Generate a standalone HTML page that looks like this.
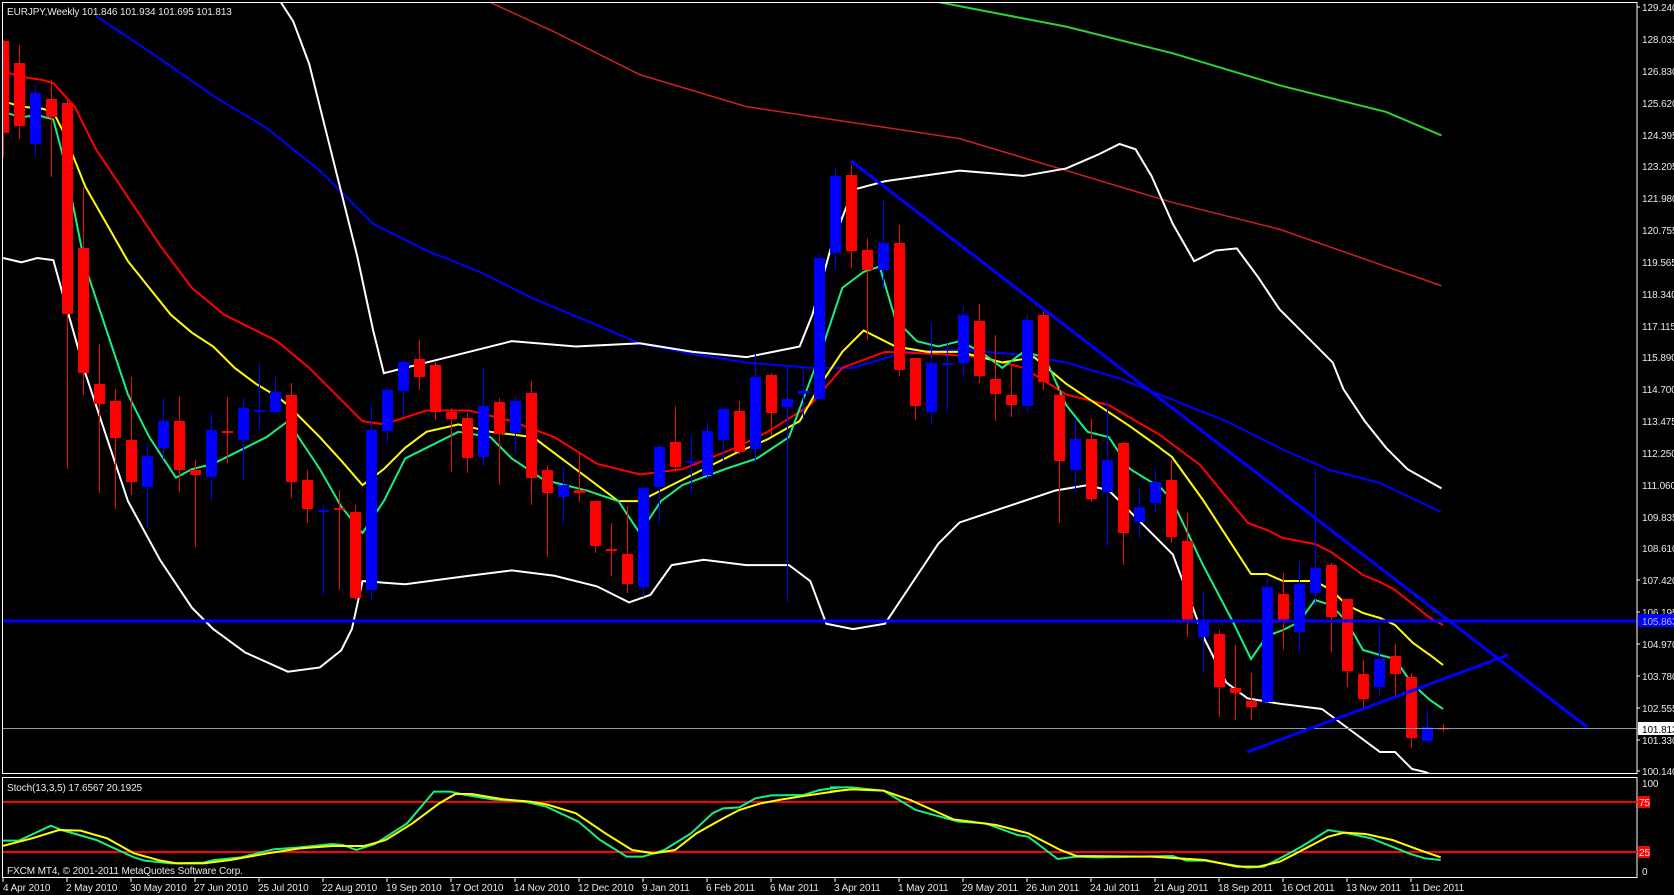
<!DOCTYPE html>
<html><head><meta charset="utf-8">
<style>
html,body{margin:0;padding:0;background:#000;width:1674px;height:895px;overflow:hidden}
svg{display:block}
text{font-family:"Liberation Sans",sans-serif;font-size:10px;letter-spacing:-0.1px;fill:#e8e8e8}
.ns{vector-effect:non-scaling-stroke;fill:none}
</style></head><body>
<svg width="1674" height="895" viewBox="0 0 1674 895" xmlns="http://www.w3.org/2000/svg">
<rect x="0" y="0" width="1674" height="895" fill="#000"/>
<defs><clipPath id="mc"><rect x="3" y="3" width="1634" height="770"/></clipPath>
<clipPath id="sc"><rect x="3" y="778" width="1634" height="99"/></clipPath></defs>

<g clip-path="url(#mc)">
<g transform="scale(1.0662)">
<polyline class="ns" stroke="#2fd32f" stroke-width="2" points="870,0 1000,25 1100,50 1200,80 1300,105 1352,127"/>
<polyline class="ns" stroke="#c8231f" stroke-width="1.5" points="455,0 520,30 600,70 700,100 800,115 900,130 1000,160 1100,190 1200,215 1300,250 1352,268"/>
<polyline class="ns" stroke="#0000ff" stroke-width="2" points="90,15 150,55 200,90 250,120 300,160 350,210 400,235 450,255 500,280 560,305 600,322 650,332 700,340 760,345 800,345 850,330 900,328 950,332 1000,340 1050,355 1100,375 1150,395 1200,420"/>
<polyline class="ns" stroke="#ffffff" stroke-width="2" points="262,0 275,20 290,60 305,120 320,180 335,240 350,310 360,350 380,345 420,335 480,320 540,325 600,322 650,330 700,335 750,325 762,295 780,230 800,178 830,170 900,160 960,165 1000,158 1030,145 1050,135 1065,140 1080,165 1100,210 1120,245 1140,235 1160,233 1180,260 1200,290 1230,320 1250,340 1260,365 1280,395 1300,420 1320,440 1352,458"/>
<polyline class="ns" stroke="#ffffff" stroke-width="2" points="3,242 20,246 35,242 50,244 60,280 80,350 100,410 120,470 150,525 180,570 200,590 230,612 270,630 300,626 320,610 330,590 340,545 380,548 440,540 480,535 520,540 560,550 590,565 610,558 630,530 660,525 700,530 740,530 760,545 775,585 800,590 830,585 860,540 880,510 900,490 930,480 960,470 990,460 1020,455 1040,460 1060,480 1080,500 1100,520 1130,600 1150,640 1170,655 1200,660 1240,665"/>
<polyline class="ns" stroke="#ff0000" stroke-width="2" points="3,67 20,72 40,75 50,78 70,100 90,140 120,185 150,230 180,270 210,295 240,310 260,320 290,345 320,375 340,395 360,398 400,385 440,385 480,395 520,410 560,435 600,445 640,440 690,420 720,405 760,380 790,345 830,330 880,332 920,335 960,345 1000,370 1040,380 1088,408"/>
<polyline class="ns" stroke="#ffff00" stroke-width="2" points="3,95 20,100 40,102 50,105 60,125 70,150 80,175 100,210 120,245 140,270 160,295 180,312 200,325 220,345 240,360 260,372 270,380 300,410 320,432 340,455 360,440 380,420 400,405 430,398 460,405 500,410 540,440 580,470 600,470 640,450 690,425 720,412 750,395 770,360 790,330 810,310 840,325 870,330 900,330 940,340 970,335 1000,360 1030,380 1060,400 1088,420"/>
<polyline class="ns" stroke="#17f080" stroke-width="2" points="3,105 20,110 35,108 50,112 60,150 70,200 80,250 100,310 120,370 140,410 165,448 180,440 200,435 230,420 250,410 270,395 300,440 320,475 340,500 360,470 380,430 400,420 430,405 460,410 480,430 510,450 550,460 580,470 600,500 620,470 640,455 680,440 710,430 740,410 770,330 790,270 810,255 825,250 840,300 860,320 880,325 900,320 920,330 940,345 960,330 980,335 1000,380 1020,405 1040,410 1060,440 1088,457"/>
</g>
<polyline fill="none" stroke="#0000ff" stroke-width="2" points="1279,448 1330,470 1380,483 1441,512"/>
<polyline fill="none" stroke="#ffffff" stroke-width="2" points="1322,709 1380,752 1395,752 1412,769 1425,772 1432,775"/>
<polyline fill="none" stroke="#ff0000" stroke-width="2" points="1160,435 1200,465 1248,523 1267,530 1283,538 1315,544 1331,552 1363,575 1380,582 1395,590 1410,602 1430,618 1443,625"/>
<polyline fill="none" stroke="#ffff00" stroke-width="2" points="1160,448 1172,457 1203,500 1251,574 1267,574 1283,581 1315,581 1331,590 1347,605 1363,613 1380,618 1395,625 1413,643 1430,655 1443,665"/>
<polyline fill="none" stroke="#17f080" stroke-width="2" points="1160,487 1172,500 1203,565 1232,620 1251,659 1267,636 1283,630 1299,622 1315,600 1331,605 1347,622 1363,650 1380,655 1395,659 1408,678 1420,691 1430,700 1443,709"/>

<g id="cd">
<line x1="3.5" y1="40" x2="3.5" y2="158" stroke="#f00"/><rect x="-2" y="41" width="11" height="92" fill="#f00"/>
<line x1="19.5" y1="45" x2="19.5" y2="139" stroke="#f00"/><rect x="14" y="63" width="11" height="63" fill="#f00"/>
<line x1="35.5" y1="85" x2="35.5" y2="157" stroke="#00f"/><rect x="30" y="93" width="11" height="51" fill="#00f"/>
<line x1="51.5" y1="80" x2="51.5" y2="177" stroke="#f00"/><rect x="46" y="99" width="11" height="18" fill="#f00"/>
<line x1="67.5" y1="100" x2="67.5" y2="469" stroke="#f00"/><rect x="62" y="103" width="11" height="211" fill="#f00"/>
<line x1="83.5" y1="187" x2="83.5" y2="395" stroke="#f00"/><rect x="78" y="248" width="11" height="125" fill="#f00"/>
<line x1="99.5" y1="344" x2="99.5" y2="493" stroke="#f00"/><rect x="94" y="384" width="11" height="20" fill="#f00"/>
<line x1="115.5" y1="389" x2="115.5" y2="509" stroke="#f00"/><rect x="110" y="401" width="11" height="37" fill="#f00"/>
<line x1="131.5" y1="377" x2="131.5" y2="495" stroke="#f00"/><rect x="126" y="440" width="11" height="42" fill="#f00"/>
<line x1="147.5" y1="445" x2="147.5" y2="528" stroke="#00f"/><rect x="142" y="456" width="11" height="31" fill="#00f"/>
<line x1="163.5" y1="398" x2="163.5" y2="459" stroke="#00f"/><rect x="158" y="421" width="11" height="27" fill="#00f"/>
<line x1="179.5" y1="396" x2="179.5" y2="492" stroke="#f00"/><rect x="174" y="421" width="11" height="49" fill="#f00"/>
<line x1="195.5" y1="460" x2="195.5" y2="547" stroke="#f00"/><rect x="190" y="470" width="11" height="5" fill="#f00"/>
<line x1="211.5" y1="413" x2="211.5" y2="501" stroke="#00f"/><rect x="206" y="430" width="11" height="47" fill="#00f"/>
<line x1="227.5" y1="397" x2="227.5" y2="463" stroke="#f00"/><rect x="222" y="431" width="11" height="2" fill="#f00"/>
<line x1="243.5" y1="398" x2="243.5" y2="480" stroke="#00f"/><rect x="238" y="408" width="11" height="32" fill="#00f"/>
<line x1="259.5" y1="363" x2="259.5" y2="430" stroke="#00f"/><rect x="254" y="410" width="11" height="2" fill="#00f"/>
<line x1="275.5" y1="377" x2="275.5" y2="413" stroke="#00f"/><rect x="270" y="392" width="11" height="20" fill="#00f"/>
<line x1="291.5" y1="383" x2="291.5" y2="498" stroke="#f00"/><rect x="286" y="395" width="11" height="87" fill="#f00"/>
<line x1="307.5" y1="470" x2="307.5" y2="523" stroke="#f00"/><rect x="302" y="480" width="11" height="29" fill="#f00"/>
<line x1="323.5" y1="505" x2="323.5" y2="595" stroke="#00f"/><rect x="318" y="510" width="11" height="2" fill="#00f"/>
<line x1="339.5" y1="490" x2="339.5" y2="590" stroke="#f00"/><rect x="334" y="508" width="11" height="2" fill="#f00"/>
<line x1="355.5" y1="505" x2="355.5" y2="600" stroke="#f00"/><rect x="350" y="512" width="11" height="86" fill="#f00"/>
<line x1="371.5" y1="405" x2="371.5" y2="600" stroke="#00f"/><rect x="366" y="430" width="11" height="160" fill="#00f"/>
<line x1="387.5" y1="387" x2="387.5" y2="443" stroke="#00f"/><rect x="382" y="390" width="11" height="41" fill="#00f"/>
<line x1="403.5" y1="360" x2="403.5" y2="415" stroke="#00f"/><rect x="398" y="362" width="11" height="29" fill="#00f"/>
<line x1="419.5" y1="340" x2="419.5" y2="390" stroke="#f00"/><rect x="414" y="359" width="11" height="18" fill="#f00"/>
<line x1="435.5" y1="362" x2="435.5" y2="420" stroke="#f00"/><rect x="430" y="365" width="11" height="47" fill="#f00"/>
<line x1="451.5" y1="408" x2="451.5" y2="472" stroke="#f00"/><rect x="446" y="412" width="11" height="7" fill="#f00"/>
<line x1="467.5" y1="413" x2="467.5" y2="473" stroke="#f00"/><rect x="462" y="418" width="11" height="40" fill="#f00"/>
<line x1="483.5" y1="369" x2="483.5" y2="466" stroke="#00f"/><rect x="478" y="406" width="11" height="51" fill="#00f"/>
<line x1="499.5" y1="398" x2="499.5" y2="485" stroke="#f00"/><rect x="494" y="402" width="11" height="32" fill="#f00"/>
<line x1="515.5" y1="397" x2="515.5" y2="453" stroke="#00f"/><rect x="510" y="401" width="11" height="32" fill="#00f"/>
<line x1="531.5" y1="381" x2="531.5" y2="505" stroke="#f00"/><rect x="526" y="393" width="11" height="85" fill="#f00"/>
<line x1="547.5" y1="465" x2="547.5" y2="557" stroke="#f00"/><rect x="542" y="470" width="11" height="23" fill="#f00"/>
<line x1="563.5" y1="467" x2="563.5" y2="523" stroke="#00f"/><rect x="558" y="485" width="11" height="12" fill="#00f"/>
<line x1="579.5" y1="454" x2="579.5" y2="502" stroke="#f00"/><rect x="574" y="490" width="11" height="3" fill="#f00"/>
<line x1="595.5" y1="501" x2="595.5" y2="553" stroke="#f00"/><rect x="590" y="501" width="11" height="45" fill="#f00"/>
<line x1="611.5" y1="523" x2="611.5" y2="576" stroke="#f00"/><rect x="606" y="549" width="11" height="2" fill="#f00"/>
<line x1="627.5" y1="506" x2="627.5" y2="593" stroke="#f00"/><rect x="622" y="554" width="11" height="30" fill="#f00"/>
<line x1="643.5" y1="485" x2="643.5" y2="597" stroke="#00f"/><rect x="638" y="488" width="11" height="99" fill="#00f"/>
<line x1="659.5" y1="445" x2="659.5" y2="523" stroke="#00f"/><rect x="654" y="447" width="11" height="40" fill="#00f"/>
<line x1="675.5" y1="406" x2="675.5" y2="472" stroke="#f00"/><rect x="670" y="442" width="11" height="25" fill="#f00"/>
<line x1="691.5" y1="435" x2="691.5" y2="493" stroke="#00f"/><rect x="686" y="461" width="11" height="2" fill="#00f"/>
<line x1="707.5" y1="421" x2="707.5" y2="480" stroke="#00f"/><rect x="702" y="431" width="11" height="44" fill="#00f"/>
<line x1="723.5" y1="407" x2="723.5" y2="462" stroke="#00f"/><rect x="718" y="409" width="11" height="31" fill="#00f"/>
<line x1="739.5" y1="401" x2="739.5" y2="455" stroke="#f00"/><rect x="734" y="411" width="11" height="41" fill="#f00"/>
<line x1="755.5" y1="354" x2="755.5" y2="462" stroke="#00f"/><rect x="750" y="377" width="11" height="72" fill="#00f"/>
<line x1="771.5" y1="373" x2="771.5" y2="436" stroke="#f00"/><rect x="766" y="375" width="11" height="38" fill="#f00"/>
<line x1="787.5" y1="365" x2="787.5" y2="602" stroke="#00f"/><rect x="782" y="399" width="11" height="8" fill="#00f"/>
<line x1="803.5" y1="370" x2="803.5" y2="420" stroke="#00f"/><rect x="798" y="391" width="11" height="3" fill="#00f"/>
<line x1="819.5" y1="253" x2="819.5" y2="400" stroke="#00f"/><rect x="814" y="258" width="11" height="141" fill="#00f"/>
<line x1="835.5" y1="167" x2="835.5" y2="270" stroke="#00f"/><rect x="830" y="176" width="11" height="77" fill="#00f"/>
<line x1="851.5" y1="165" x2="851.5" y2="268" stroke="#f00"/><rect x="846" y="175" width="11" height="76" fill="#f00"/>
<line x1="867.5" y1="238" x2="867.5" y2="340" stroke="#f00"/><rect x="862" y="250" width="11" height="20" fill="#f00"/>
<line x1="883.5" y1="200" x2="883.5" y2="288" stroke="#00f"/><rect x="878" y="243" width="11" height="27" fill="#00f"/>
<line x1="899.5" y1="225" x2="899.5" y2="376" stroke="#f00"/><rect x="894" y="243" width="11" height="127" fill="#f00"/>
<line x1="915.5" y1="358" x2="915.5" y2="420" stroke="#f00"/><rect x="910" y="358" width="11" height="48" fill="#f00"/>
<line x1="931.5" y1="322" x2="931.5" y2="423" stroke="#00f"/><rect x="926" y="363" width="11" height="49" fill="#00f"/>
<line x1="947.5" y1="343" x2="947.5" y2="411" stroke="#00f"/><rect x="942" y="363" width="11" height="2" fill="#00f"/>
<line x1="963.5" y1="306" x2="963.5" y2="376" stroke="#00f"/><rect x="958" y="315" width="11" height="48" fill="#00f"/>
<line x1="979.5" y1="304" x2="979.5" y2="383" stroke="#f00"/><rect x="974" y="321" width="11" height="55" fill="#f00"/>
<line x1="995.5" y1="335" x2="995.5" y2="421" stroke="#f00"/><rect x="990" y="379" width="11" height="15" fill="#f00"/>
<line x1="1011.5" y1="366" x2="1011.5" y2="417" stroke="#f00"/><rect x="1006" y="395" width="11" height="10" fill="#f00"/>
<line x1="1027.5" y1="314" x2="1027.5" y2="412" stroke="#00f"/><rect x="1022" y="320" width="11" height="86" fill="#00f"/>
<line x1="1043.5" y1="310" x2="1043.5" y2="390" stroke="#f00"/><rect x="1038" y="315" width="11" height="67" fill="#f00"/>
<line x1="1059.5" y1="386" x2="1059.5" y2="523" stroke="#f00"/><rect x="1054" y="395" width="11" height="66" fill="#f00"/>
<line x1="1075.5" y1="418" x2="1075.5" y2="493" stroke="#00f"/><rect x="1070" y="439" width="11" height="31" fill="#00f"/>
<line x1="1091.5" y1="419" x2="1091.5" y2="502" stroke="#f00"/><rect x="1086" y="439" width="11" height="60" fill="#f00"/>
<line x1="1107.5" y1="402" x2="1107.5" y2="547" stroke="#00f"/><rect x="1102" y="460" width="11" height="32" fill="#00f"/>
<line x1="1123.5" y1="442" x2="1123.5" y2="565" stroke="#f00"/><rect x="1118" y="443" width="11" height="90" fill="#f00"/>
<line x1="1139.5" y1="487" x2="1139.5" y2="538" stroke="#00f"/><rect x="1134" y="507" width="11" height="15" fill="#00f"/>
<line x1="1155.5" y1="469" x2="1155.5" y2="512" stroke="#00f"/><rect x="1150" y="482" width="11" height="21" fill="#00f"/>
<line x1="1171.5" y1="460" x2="1171.5" y2="543" stroke="#f00"/><rect x="1166" y="480" width="11" height="57" fill="#f00"/>
<line x1="1187.5" y1="513" x2="1187.5" y2="637" stroke="#f00"/><rect x="1182" y="541" width="11" height="79" fill="#f00"/>
<line x1="1203.5" y1="592" x2="1203.5" y2="673" stroke="#00f"/><rect x="1198" y="621" width="11" height="16" fill="#00f"/>
<line x1="1219.5" y1="630" x2="1219.5" y2="717" stroke="#f00"/><rect x="1214" y="634" width="11" height="53" fill="#f00"/>
<line x1="1235.5" y1="645" x2="1235.5" y2="720" stroke="#f00"/><rect x="1230" y="688" width="11" height="5" fill="#f00"/>
<line x1="1251.5" y1="673" x2="1251.5" y2="720" stroke="#f00"/><rect x="1246" y="701" width="11" height="6" fill="#f00"/>
<line x1="1267.5" y1="578" x2="1267.5" y2="703" stroke="#00f"/><rect x="1262" y="587" width="11" height="115" fill="#00f"/>
<line x1="1283.5" y1="573" x2="1283.5" y2="650" stroke="#f00"/><rect x="1278" y="594" width="11" height="26" fill="#f00"/>
<line x1="1299.5" y1="561" x2="1299.5" y2="652" stroke="#00f"/><rect x="1294" y="584" width="11" height="48" fill="#00f"/>
<line x1="1315.5" y1="469" x2="1315.5" y2="605" stroke="#00f"/><rect x="1310" y="568" width="11" height="25" fill="#00f"/>
<line x1="1331.5" y1="563" x2="1331.5" y2="652" stroke="#f00"/><rect x="1326" y="565" width="11" height="52" fill="#f00"/>
<line x1="1347.5" y1="599" x2="1347.5" y2="687" stroke="#f00"/><rect x="1342" y="599" width="11" height="72" fill="#f00"/>
<line x1="1363.5" y1="660" x2="1363.5" y2="710" stroke="#f00"/><rect x="1358" y="674" width="11" height="25" fill="#f00"/>
<line x1="1379.5" y1="626" x2="1379.5" y2="695" stroke="#00f"/><rect x="1374" y="659" width="11" height="28" fill="#00f"/>
<line x1="1395.5" y1="644" x2="1395.5" y2="697" stroke="#f00"/><rect x="1390" y="656" width="11" height="18" fill="#f00"/>
<line x1="1411.5" y1="673" x2="1411.5" y2="748" stroke="#f00"/><rect x="1406" y="677" width="11" height="61" fill="#f00"/>
<line x1="1427.5" y1="709" x2="1427.5" y2="743" stroke="#00f"/><rect x="1422" y="727" width="11" height="14" fill="#00f"/>
<line x1="1443.5" y1="724" x2="1443.5" y2="732" stroke="#f00"/><rect x="1438" y="728" width="11" height="1.5" fill="#f00"/>
</g>

<line x1="3" y1="728.5" x2="1637" y2="728.5" stroke="#8899aa" stroke-width="1"/>
<line x1="3" y1="621" x2="1637" y2="621" stroke="#0000ff" stroke-width="3"/>
<line x1="851" y1="161" x2="1587" y2="727" stroke="#0000ff" stroke-width="3"/>
<line x1="1247" y1="752" x2="1508" y2="655" stroke="#0000ff" stroke-width="3"/>
</g>

<rect x="2.5" y="2.5" width="1634.5" height="771" fill="none" stroke="#fff" stroke-width="1"/>
<rect x="2.5" y="777.5" width="1634.5" height="100" fill="none" stroke="#fff" stroke-width="1"/>

<text x="7" y="15">EURJPY,Weekly  101.846 101.934 101.695 101.813</text>

<g>
<text x="1642" y="11">129.240</text><text x="1642" y="43">128.035</text><text x="1642" y="75">126.830</text><text x="1642" y="107">125.620</text><text x="1642" y="139">124.395</text><text x="1642" y="170">123.205</text><text x="1642" y="202">121.980</text><text x="1642" y="234">120.755</text><text x="1642" y="266">119.565</text><text x="1642" y="298">118.340</text><text x="1642" y="330">117.115</text><text x="1642" y="361">115.890</text><text x="1642" y="393">114.700</text><text x="1642" y="425">113.475</text><text x="1642" y="457">112.250</text><text x="1642" y="489">111.060</text><text x="1642" y="521">109.835</text><text x="1642" y="552">108.610</text><text x="1642" y="584">107.420</text><text x="1642" y="616">106.195</text><text x="1642" y="648">104.970</text><text x="1642" y="680">103.780</text><text x="1642" y="712">102.555</text><text x="1642" y="744">101.330</text><text x="1642" y="775">100.140</text>
</g>
<g stroke="#fff" stroke-width="1">
<line x1="1637" y1="7" x2="1640" y2="7"/><line x1="1637" y1="580" x2="1640" y2="580"/><line x1="1637" y1="612" x2="1640" y2="612"/><line x1="1637" y1="644" x2="1640" y2="644"/><line x1="1637" y1="676" x2="1640" y2="676"/><line x1="1637" y1="708" x2="1640" y2="708"/><line x1="1637" y1="740" x2="1640" y2="740"/><line x1="1637" y1="771" x2="1640" y2="771"/>
</g>
<rect x="1638" y="614" width="36" height="13" fill="#0000ff"/>
<text x="1642" y="625" style="fill:#aab8ff">105.863</text>
<rect x="1638" y="722" width="36" height="13" fill="#fff"/>
<text x="1642" y="733" style="fill:#000">101.813</text>

<g clip-path="url(#sc)">
<line x1="3" y1="802" x2="1637" y2="802" stroke="#ff0000" stroke-width="2"/>
<line x1="3" y1="852" x2="1637" y2="852" stroke="#ff0000" stroke-width="2"/>
<g transform="translate(0,770) scale(0.5357,0.3333)">
<polyline class="ns" stroke="#17f080" stroke-width="2" points="0,212 35,212 95,167 115,180 180,210 250,262 270,272 320,280 380,278 400,270 450,262 510,238 560,232 620,222 640,225 665,240 700,222 760,160 810,65 840,65 870,75 920,88 980,95 1020,110 1080,155 1120,210 1170,260 1200,260 1240,240 1290,190 1330,130 1350,115 1380,112 1410,85 1440,76 1500,75 1530,60 1568,52"/>
<polyline class="ns" stroke="#ffff00" stroke-width="2" points="0,230 60,205 110,180 150,182 200,205 250,250 300,272 330,280 380,280 430,270 500,250 560,235 620,228 680,228 720,210 770,160 820,100 850,72 880,72 940,88 990,95 1020,103 1075,130 1130,190 1180,240 1220,250 1260,240 1300,190 1350,145 1380,120 1420,100 1460,88 1500,78 1568,62"/>
</g>
<g transform="translate(830,770) scale(0.5357,0.3333)">
<polyline class="ns" stroke="#17f080" stroke-width="2" points="0,52 40,52 100,62 160,120 240,155 290,160 350,195 370,200 425,267 460,260 500,262 640,258 665,272 700,272 780,293 810,290 840,265 880,230 930,180 960,188 1010,205 1080,250 1110,265 1140,270"/>
<polyline class="ns" stroke="#ffff00" stroke-width="2" points="0,65 40,58 100,62 150,90 230,148 310,165 370,190 430,240 460,258 600,260 700,270 760,290 800,290 840,275 870,250 930,200 960,188 1000,192 1050,210 1100,240 1140,262"/>
</g>
</g>
<text x="7" y="791">Stoch(13,3,5) 17.6567 20.1925</text>
<text x="7" y="874">FXCM MT4, © 2001-2011 MetaQuotes Software Corp.</text>
<text x="1642" y="787">100</text>
<rect x="1638" y="796" width="12" height="12" fill="#ff0000"/><text x="1639" y="806">75</text>
<rect x="1638" y="846" width="12" height="12" fill="#ff0000"/><text x="1639" y="856">25</text>
<text x="1642" y="875">0</text>

<g stroke="#fff" stroke-width="1">
<line x1="3" y1="878" x2="3" y2="882"/><line x1="67" y1="878" x2="67" y2="882"/><line x1="131" y1="878" x2="131" y2="882"/><line x1="195" y1="878" x2="195" y2="882"/><line x1="259" y1="878" x2="259" y2="882"/><line x1="323" y1="878" x2="323" y2="882"/><line x1="387" y1="878" x2="387" y2="882"/><line x1="451" y1="878" x2="451" y2="882"/><line x1="515" y1="878" x2="515" y2="882"/><line x1="579" y1="878" x2="579" y2="882"/><line x1="643" y1="878" x2="643" y2="882"/><line x1="707" y1="878" x2="707" y2="882"/><line x1="771" y1="878" x2="771" y2="882"/><line x1="835" y1="878" x2="835" y2="882"/><line x1="899" y1="878" x2="899" y2="882"/><line x1="963" y1="878" x2="963" y2="882"/><line x1="1027" y1="878" x2="1027" y2="882"/><line x1="1091" y1="878" x2="1091" y2="882"/><line x1="1155" y1="878" x2="1155" y2="882"/><line x1="1219" y1="878" x2="1219" y2="882"/><line x1="1283" y1="878" x2="1283" y2="882"/><line x1="1347" y1="878" x2="1347" y2="882"/><line x1="1411" y1="878" x2="1411" y2="882"/>
</g>
<g>
<text x="3" y="891">4 Apr 2010</text><text x="66" y="891">2 May 2010</text><text x="130" y="891">30 May 2010</text><text x="194" y="891">27 Jun 2010</text><text x="258" y="891">25 Jul 2010</text><text x="322" y="891">22 Aug 2010</text><text x="386" y="891">19 Sep 2010</text><text x="450" y="891">17 Oct 2010</text><text x="514" y="891">14 Nov 2010</text><text x="578" y="891">12 Dec 2010</text><text x="642" y="891">9 Jan 2011</text><text x="706" y="891">6 Feb 2011</text><text x="770" y="891">6 Mar 2011</text><text x="834" y="891">3 Apr 2011</text><text x="898" y="891">1 May 2011</text><text x="962" y="891">29 May 2011</text><text x="1026" y="891">26 Jun 2011</text><text x="1090" y="891">24 Jul 2011</text><text x="1154" y="891">21 Aug 2011</text><text x="1218" y="891">18 Sep 2011</text><text x="1282" y="891">16 Oct 2011</text><text x="1346" y="891">13 Nov 2011</text><text x="1410" y="891">11 Dec 2011</text>
</g>
</svg>
</body></html>
